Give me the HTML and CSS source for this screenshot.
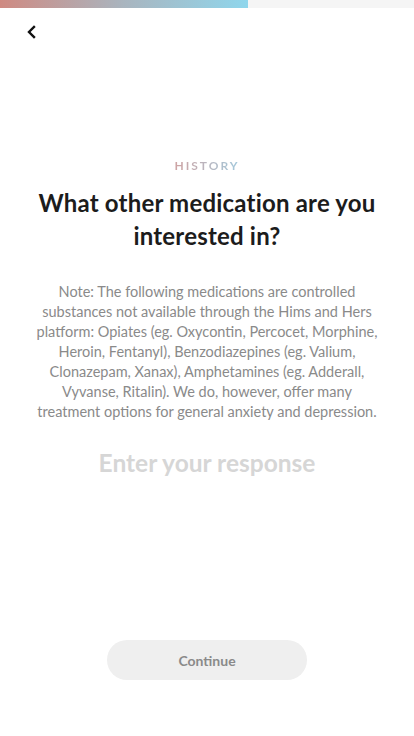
FILE: index.html
```html
<!DOCTYPE html>
<html lang="en">
<head>
    <meta charset="UTF-8">
    <meta name="viewport" content="width=device-width, initial-scale=1.0">
    <title>History</title>
    <link rel="stylesheet" href="styles.css">
</head>
<body>
    <div class="page">
        <div class="progress">
            <div class="progress-fill"></div>
        </div>
        <div class="topbar">
            <button class="back-btn" aria-label="Back">
                <svg width="12" height="14" viewBox="0 0 12 14">
                    <path d="M8 2 L3 7 L8 12" fill="none" stroke="#111" stroke-width="2.4" stroke-linecap="square"/>
                </svg>
            </button>
        </div>
        <div class="question">
            <div class="section-label">HISTORY</div>
            <h1>What other medication are you interested in?</h1>
            <p class="note">Note: The following medications are controlled<br>
                substances not available through the Hims and Hers<br>
                platform: Opiates (eg. Oxycontin, Percocet, Morphine,<br>
                Heroin, Fentanyl), Benzodiazepines (eg. Valium,<br>
                Clonazepam, Xanax), Amphetamines (eg. Adderall,<br>
                Vyvanse, Ritalin). We do, however, offer many<br>
                treatment options for general anxiety and depression.</p>
            <input type="text" class="response-input" placeholder="Enter your response">
        </div>
        <div class="footer">
            <button class="continue-btn">Continue</button>
        </div>
    </div>
</body>
</html>
```

FILE: styles.css
```css
body {
    margin: 0;
    padding: 0;
    background-color: #ffffff;
    font-family: Lato, "Open Sans", sans-serif;
}
.page {
    display: flex;
    flex-direction: column;
    height: 736px;
}
.progress {
    height: 8px;
    background-color: #f5f5f5;
}
.progress-fill {
    width: 248px;
    height: 100%;
    background: linear-gradient(90deg, #cf8a82, #a9b5bf 50%, #8fd6ec);
}
.topbar {
    height: 48px;
    display: flex;
    align-items: center;
    padding-left: 24px;
}
.back-btn {
    background: none;
    border: none;
    padding: 2px;
    width: 16px;
    height: 18px;
    cursor: pointer;
    display: flex;
    align-items: center;
    justify-content: center;
}
.question {
    padding: 102px 16px 0;
    text-align: center;
}
.section-label {
    width: fit-content;
    margin: 0 auto;
    font-size: 12px;
    line-height: 16px;
    font-weight: 700;
    letter-spacing: 2px;
    background: linear-gradient(90deg, #cfa3a3, #a3c9dc);
    -webkit-background-clip: text;
    background-clip: text;
    color: transparent;
}
h1 {
    margin: 12px 0 0;
    font-size: 24px;
    line-height: 33px;
    font-weight: 700;
    letter-spacing: 0.2px;
    color: #1c1c1c;
    padding: 0 16px;
}
.note {
    margin: 30px 0 0;
    font-size: 14.5px;
    line-height: 20px;
    color: #8a8a8a;
    white-space: nowrap;
}
.response-input {
    margin-top: 25px;
    width: 100%;
    height: 30px;
    border: none;
    outline: none;
    padding: 0;
    text-align: center;
    font-family: Lato, "Open Sans", sans-serif;
    font-size: 24.5px;
    font-weight: 700;
    color: #333;
}
.response-input::placeholder {
    color: #d6d6d6;
}
.footer {
    margin-top: auto;
    margin-bottom: 56px;
    display: flex;
    justify-content: center;
}
.continue-btn {
    width: 200px;
    height: 40px;
    border: none;
    border-radius: 20px;
    background-color: #efefef;
    color: #8a8a8a;
    font-family: Lato, "Open Sans", sans-serif;
    font-size: 14px;
    font-weight: 700;
    cursor: pointer;
}
```
